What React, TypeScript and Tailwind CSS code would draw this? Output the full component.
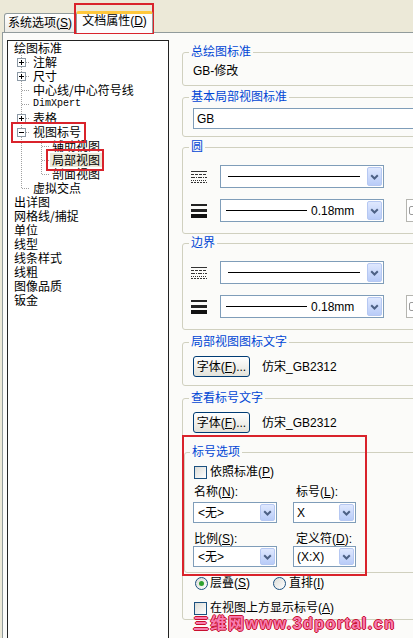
import type { ReactNode } from 'react'

const UI = "font-['Liberation_Sans','Noto_Sans_CJK_SC',sans-serif]"
const CJK = "font-['Noto_Sans_CJK_SC',sans-serif]"

type TreeRow = {
  label: string
  level: 0 | 1 | 2
  box?: 'plus' | 'minus'
  last?: boolean
  mono?: boolean
  selected?: boolean
}

const TREE: TreeRow[] = [
  { label: '绘图标准', level: 0 },
  { label: '注解', level: 1, box: 'plus' },
  { label: '尺寸', level: 1, box: 'plus' },
  { label: '中心线/中心符号线', level: 1 },
  { label: 'DimXpert', level: 1, mono: true },
  { label: '表格', level: 1, box: 'plus' },
  { label: '视图标号', level: 1, box: 'minus' },
  { label: '辅助视图', level: 2 },
  { label: '局部视图', level: 2, selected: true },
  { label: '剖面视图', level: 2, last: true },
  { label: '虚拟交点', level: 1, last: true },
  { label: '出详图', level: 0 },
  { label: '网格线/捕捉', level: 0 },
  { label: '单位', level: 0 },
  { label: '线型', level: 0 },
  { label: '线条样式', level: 0 },
  { label: '线粗', level: 0 },
  { label: '图像品质', level: 0 },
  { label: '钣金', level: 0 },
]

const DOT = { stroke: '#A0A0A0', strokeDasharray: '1 1', shapeRendering: 'crispEdges' as const }

function Gutter({ row }: { row: TreeRow }) {
  if (row.level === 0) return <span className="w-[6px] shrink-0" />
  if (row.level === 1) {
    return (
      <svg width="25" height="14" className="shrink-0">
        <line x1="13.5" y1="0" x2="13.5" y2={row.last ? 7 : 14} {...DOT} />
        <line x1="14" y1="7.5" x2="22" y2="7.5" {...DOT} />
        {row.box && (
          <g shapeRendering="crispEdges">
            <rect x="9.5" y="3.5" width="8" height="8" fill="#fff" stroke="#8D9AA6" />
            <line x1="11" y1="7.5" x2="16" y2="7.5" stroke="#000" />
            {row.box === 'plus' && <line x1="13.5" y1="5" x2="13.5" y2="10" stroke="#000" />}
          </g>
        )}
      </svg>
    )
  }
  return (
    <svg width="42" height="14" className="shrink-0">
      <line x1="13.5" y1="0" x2="13.5" y2="14" {...DOT} />
      <line x1="33.5" y1="0" x2="33.5" y2={row.last ? 7 : 14} {...DOT} />
      <line x1="34" y1="7.5" x2="42" y2="7.5" {...DOT} />
    </svg>
  )
}

function Tree() {
  return (
    <div className={`mt-[7px] ml-[4px] h-[640px] w-[162px] shrink-0 border border-[#222] bg-white text-[12px] leading-[14px] ${CJK}`}>
      {TREE.map((row) => (
        <div key={row.label} className="flex h-[14px] items-center whitespace-nowrap">
          <Gutter row={row} />
          {row.mono ? (
            <span className="font-['Liberation_Mono',monospace] text-[10px] leading-[14px]">{row.label}</span>
          ) : (
            <span className={`leading-[14px] ${row.selected ? 'bg-[#ECE9D8] px-[2px]' : row.level === 2 ? 'px-[2px]' : ''}`}>
              {row.label}
            </span>
          )}
        </div>
      ))}
    </div>
  )
}

function Key({ children }: { children: ReactNode }) {
  return <span className="underline underline-offset-[1px]">{children}</span>
}

function DropButton() {
  return (
    <span className="my-px mr-px flex w-[15px] shrink-0 items-center justify-center rounded-[2px] border border-[#B6C8F2] bg-linear-to-b from-[#DFE8FE] to-[#B9CCF8]">
      <svg width="9" height="6" viewBox="0 0 9 6">
        <path d="M1.2 1.2 L4.5 4.5 L7.8 1.2" fill="none" stroke="#4D6185" strokeWidth="2" />
      </svg>
    </span>
  )
}

function Combo({ className, children }: { className: string; children: ReactNode }) {
  return (
    <div className={`flex shrink-0 border border-[#7F9DB9] bg-white ${className}`}>
      <div className="flex min-w-0 flex-1 items-center whitespace-nowrap">{children}</div>
      <DropButton />
    </div>
  )
}

function Group({ title, className, children }: { title: ReactNode; className?: string; children: ReactNode }) {
  return (
    <fieldset className={`w-full rounded-[3px] border border-[#D0D0BF] ${className ?? ''}`}>
      <legend className="ml-[6px] px-[2px] leading-[14px] text-[#0046D5]">{title}</legend>
      {children}
    </fieldset>
  )
}

function LineTypeIcon() {
  return (
    <svg width="16" height="14" className="shrink-0" shapeRendering="crispEdges">
      <line x1="0" y1="1.5" x2="16" y2="1.5" stroke="#333" />
      <line x1="0" y1="4.5" x2="16" y2="4.5" stroke="#333" strokeDasharray="3 1" />
      <line x1="0" y1="7.5" x2="16" y2="7.5" stroke="#333" strokeDasharray="4 1 1 1" />
      <line x1="0" y1="10.5" x2="16" y2="10.5" stroke="#333" strokeDasharray="1 1" />
      <line x1="0" y1="12.5" x2="16" y2="12.5" stroke="#333" strokeDasharray="2 1" />
    </svg>
  )
}

function LineWeightIcon() {
  return (
    <svg width="16" height="16" className="shrink-0" shapeRendering="crispEdges">
      <rect x="0" y="1" width="16" height="2" fill="#222" />
      <rect x="0" y="6" width="16" height="3" fill="#222" />
      <rect x="0" y="11" width="16" height="4" fill="#111" />
    </svg>
  )
}

function LineRows() {
  return (
    <div className="flex flex-col gap-[11px] pb-[11px] pt-[11px]">
      <div className="flex items-center pl-[8px]">
        <LineTypeIcon />
        <Combo className="ml-[13px] h-[23px] w-[164px]">
          <span className="ml-[7px] h-[1.5px] w-[132px] bg-black" />
        </Combo>
      </div>
      <div className="flex items-center pl-[8px]">
        <LineWeightIcon />
        <Combo className="ml-[13px] h-[23px] w-[164px]">
          <span className="ml-[5px] h-[1.5px] w-[81px] bg-black" />
          <span className="ml-[4px]">0.18mm</span>
        </Combo>
        <span className="ml-[22px] flex h-[23px] w-[30px] items-center border border-[#B5B5B0] bg-white pl-[2px]">
          <span className="h-[9px] w-[6px] rounded-[2px] border border-[#9A9A9A]" />
        </span>
      </div>
    </div>
  )
}

function XpButton({ children }: { children: ReactNode }) {
  return (
    <span className="flex h-[21px] w-[57px] shrink-0 items-center justify-center rounded-[3px] border border-[#003C74] bg-linear-to-b from-white to-[#E3E2DA]">
      {children}
    </span>
  )
}

function CheckBox() {
  return <span className="h-[13px] w-[13px] shrink-0 border border-[#1C5180] bg-linear-to-br from-[#DCDCD7] to-white" />
}

function Radio({ checked }: { checked?: boolean }) {
  return (
    <span className="flex h-[13px] w-[13px] shrink-0 items-center justify-center rounded-full border border-[#1C5180] bg-linear-to-br from-[#DCDCD7] to-white">
      {checked && <span className="h-[5px] w-[5px] rounded-full bg-[#2FA12F]" />}
    </span>
  )
}

function RightColumn() {
  return (
    <div className="ml-[13px] mt-[12px] flex w-[262px] shrink-0 flex-col text-[12px] leading-[14px]">
      <Group title="总绘图标准">
        <div className="pb-[7px] pl-[10px] pt-[5px]">GB-修改</div>
      </Group>

      <Group title="基本局部视图标准" className="mt-[4px]">
        <div className="pb-[7px] pl-[10px] pt-[4px]">
          <div className="flex h-[21px] items-center border border-[#7F9DB9] bg-white pl-[3px]">GB</div>
        </div>
      </Group>

      <Group title="圆" className="mt-[3px]">
        <LineRows />
      </Group>

      <Group title="边界" className="mt-[2px]">
        <LineRows />
      </Group>

      <Group title="局部视图图标文字" className="mt-[5px]">
        <div className="flex items-center pb-[8px] pl-[10px] pt-[7px]">
          <XpButton>
            字体(<Key>F</Key>)...
          </XpButton>
          <span className="ml-[12px]">仿宋_GB2312</span>
        </div>
      </Group>

      <Group title="查看标号文字" className="mt-[5px]">
        <div className="flex items-center pl-[10px] pt-[7px]">
          <XpButton>
            字体(<Key>F</Key>)...
          </XpButton>
          <span className="ml-[12px]">仿宋_GB2312</span>
        </div>

        <fieldset className="ml-[1px] mt-[12px] rounded-[3px] border border-[#D0D0BF]">
          <legend className="ml-[5px] px-[2px] leading-[14px] text-[#0046D5]">标号选项</legend>
          <div className="pb-[5px] pl-[8px]">
            <div className="mt-[6px] flex h-[14px] items-center pl-[1px]">
              <CheckBox />
              <span className="ml-[3px]">
                依照标准(<Key>P</Key>)
              </span>
            </div>
            <div className="mt-[6px] grid grid-cols-[84px_63px] gap-x-[16px]">
              <span className="pl-[1px]">
                名称(<Key>N</Key>):
              </span>
              <span className="pl-[3px]">
                标号(<Key>L</Key>):
              </span>
              <Combo className="mt-[3px] h-[21px] w-[84px]">
                <span className="pl-[4px]">&lt;无&gt;</span>
              </Combo>
              <Combo className="mt-[3px] h-[21px] w-[63px]">
                <span className="pl-[3px]">X</span>
              </Combo>
              <span className="mt-[9px] pl-[1px]">
                比例(<Key>S</Key>):
              </span>
              <span className="mt-[9px] pl-[3px]">
                定义符(<Key>D</Key>):
              </span>
              <Combo className="h-[21px] w-[84px]">
                <span className="pl-[4px]">&lt;无&gt;</span>
              </Combo>
              <Combo className="h-[21px] w-[63px]">
                <span className="pl-[3px]">(X:X)</span>
              </Combo>
            </div>
          </div>
        </fieldset>

        <div className="mt-[3px] flex h-[14px] items-center pl-[12px]">
          <Radio checked />
          <span className="ml-[2px]">
            层叠(<Key>S</Key>)
          </span>
          <span className="ml-[23px]">
            <Radio />
          </span>
          <span className="ml-[3px]">
            直排(<Key>I</Key>)
          </span>
        </div>
        <div className="mb-[4px] mt-[11px] flex h-[14px] items-center pl-[11px]">
          <CheckBox />
          <span className="ml-[3px]">
            在视图上方显示标号(<Key>A</Key>)
          </span>
        </div>
      </Group>
    </div>
  )
}

export default function App() {
  return (
    <div className={`relative h-[638px] w-[413px] overflow-hidden bg-[#ECE9D8] text-black ${UI}`}>
      <div className="flex h-[32px] items-end pl-[4px] text-[12px] leading-[14px]">
        <div className="h-[19px] w-[72px] rounded-t-[3px] border border-b-0 border-[#919B9C] bg-linear-to-b from-white to-[#ECEBE5] pt-[2px] text-center">
          系统选项(<Key>S</Key>)
        </div>
        <div className="relative z-10 -mb-px h-[22px] w-[77px] rounded-t-[3px] border-x border-t-[3px] border-x-[#919B9C] border-t-[#FFC73C] bg-[#FCFCFE] text-center">
          文档属性(<Key>D</Key>)
        </div>
      </div>

      <div className="ml-[2px] flex h-[700px] w-[520px] border border-[#919B9C] bg-[#FBFBF9]">
        <Tree />
        <RightColumn />
      </div>

      <div className="absolute left-[74px] top-[3px] h-[31px] w-[80px] border-2 border-[#D9232B]" />
      <div className="absolute left-[11px] top-[122px] h-[21px] w-[75px] border-2 border-[#D9232B]" />
      <div className="absolute left-[46px] top-[149px] h-[22px] w-[58px] border-2 border-[#D9232B]" />
      <div className="absolute left-[182px] top-[435px] h-[141px] w-[185px] border-2 border-[#D9232B]" />

      <div className="absolute left-[193px] top-[616px] whitespace-nowrap text-[16px] font-bold leading-[16px] tracking-[1.5px] text-[#F77DB0] [text-shadow:1px_0_#C8102E,-1px_0_#C8102E,0_1px_#C8102E,0_-1px_#C8102E]">
        三维网www.3dportal.cn
      </div>
    </div>
  )
}
